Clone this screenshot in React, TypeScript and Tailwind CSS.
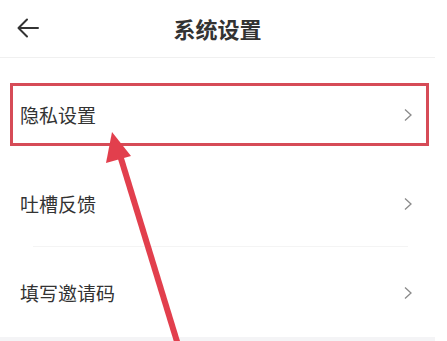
import React from "react";

function Chevron() {
  return (
    <svg width="10" height="14" viewBox="0 0 10 14" className="text-[#8a8a8a]">
      <path d="M2 1.5 L8 7 L2 12.5" fill="none" stroke="currentColor" strokeWidth="1.3" />
    </svg>
  );
}

function Row({ label, divider }: { label: string; divider?: boolean }) {
  return (
    <div className="relative h-[89px] flex items-center justify-between pl-[20px] pr-[22px]">
      <span className="text-[19px] text-[#333333] leading-none">{label}</span>
      <Chevron />
      {divider && <div className="absolute bottom-[1px] left-[33px] right-[27px] h-px bg-[#f4f4f4]" />}
    </div>
  );
}

export default function App() {
  return (
    <div
      className="relative w-[447px] h-[341px] overflow-hidden bg-white"
      style={{ fontFamily: '"Noto Sans CJK SC", "Noto Sans", sans-serif' }}
    >
      <div className="w-[435px]">
        <div className="relative h-[58px] flex items-center justify-center border-b border-[#f0f0f0]">
          <svg
            className="absolute left-[16px] top-[17px]"
            width="24"
            height="22"
            viewBox="0 0 24 22"
          >
            <path
              d="M22 11 H3 M11 2.5 L2.5 11 L11 19.5"
              fill="none"
              stroke="#333"
              strokeWidth="2"
              strokeLinecap="round"
              strokeLinejoin="round"
            />
          </svg>
          <span className="text-[22px] font-bold text-[#333333] leading-none -mt-[1px]">系统设置</span>
        </div>
        <div className="pt-[12px]">
          <Row label="隐私设置" />
          <Row label="吐槽反馈" divider />
          <Row label="填写邀请码" />
        </div>
        <div className="h-[10px] bg-[#f4f4f6]" />
      </div>

      <div className="absolute left-[10px] top-[83px] w-[419px] h-[63px] border-[3px] border-[#d64b57]" />

      <svg className="absolute left-0 top-0 pointer-events-none" width="447" height="341" viewBox="0 0 447 341">
        <line x1="179" y1="348" x2="119" y2="152" stroke="#e23f4d" strokeWidth="6" />
        <polygon points="112,132 106,163 131,156" fill="#e23f4d" />
      </svg>
    </div>
  );
}
